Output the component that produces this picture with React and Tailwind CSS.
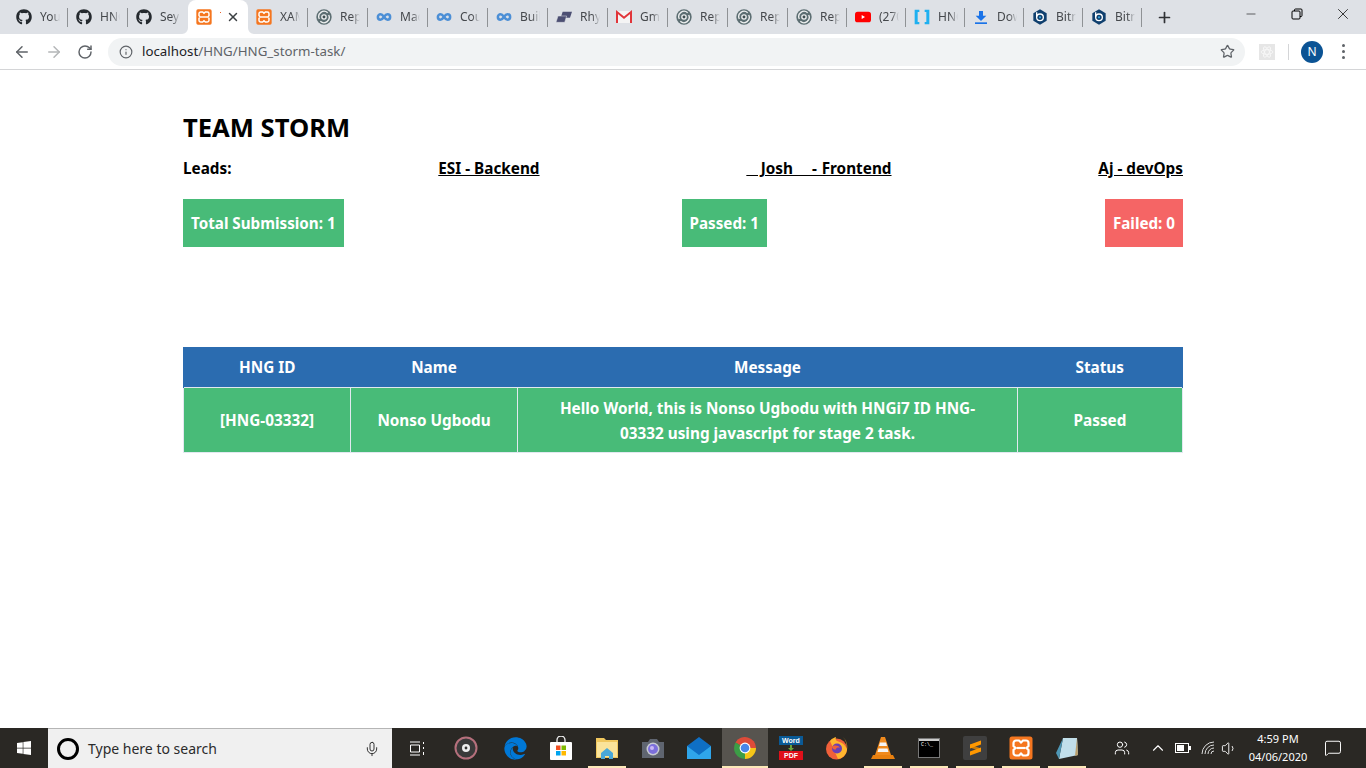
import React from "react";
import { FaGithub, FaEdge, FaWindows } from "react-icons/fa";
import { ArrowLeft, ArrowRight, RotateCw, Info, Star, Plus, X, Minus, Mic, ChevronUp, Volume1, MessageSquare, Users } from "lucide-react";

const Xampp = ({ size = 16 }) => (
    <svg width={size} height={size} viewBox="0 0 24 24">
        <rect x="0.5" y="0.5" width="23" height="23" rx="2.5" fill="#f5761f" />
        <path d="M7 4.5h3l2 2 2-2h3a2.5 2.5 0 0 1 2.5 2.5v3L17.5 12l2 2v3a2.5 2.5 0 0 1-2.5 2.5h-3l-2-2-2 2H7A2.5 2.5 0 0 1 4.5 17v-3l2-2-2-2V7A2.5 2.5 0 0 1 7 4.5z" fill="none" stroke="#fff" strokeWidth="2.2" />
        <path d="M7.5 12h9" stroke="#fff" strokeWidth="2.2" />
    </svg>
);

const Swirl = () => (
    <svg width="16" height="16" viewBox="0 0 24 24">
        <circle cx="12" cy="12" r="11.5" fill="#5c6e72" />
        <path d="M5 15A8 8 0 0 1 17.500 5.500" fill="none" stroke="#eef0f1" strokeWidth="2" />
        <path d="M19 9A8 8 0 0 1 6.500 18.500" fill="none" stroke="#eef0f1" strokeWidth="2" />
        <circle cx="12" cy="12" r="4.200" fill="#eef0f1" />
        <circle cx="12" cy="12" r="2.200" fill="#3d4d50" />
    </svg>
);

const Loop = () => (
    <svg width="16" height="16" viewBox="0 0 24 24">
        <path d="M12 12c-1.800-2.600-3.200-4-5.200-4a4 4 0 0 0 0 8c2 0 3.400-1.400 5.200-4s3.200-4 5.200-4a4 4 0 0 1 0 8c-2 0-3.400-1.400-5.200-4z" fill="none" stroke="#4c8fd6" strokeWidth="3.800" />
    </svg>
);

const Rhythm = () => (
    <svg width="16" height="16" viewBox="0 0 24 24">
        <path d="M10 4h14l-3 9H7z" fill="#4c4f73" />
        <path d="M3 10.500h13l-3 9.500H0z" fill="#4c4f73" stroke="#dee1e6" strokeWidth="0.800" />
    </svg>
);

const Gmail = () => (
    <svg width="16" height="16" viewBox="0 0 24 24">
        <rect x="0" y="3" width="24" height="18" fill="#f4f4f4" />
        <path d="M1.500 21V4.500L12 13 22.500 4.500V21" fill="none" stroke="#e1353a" strokeWidth="3" />
    </svg>
);

const Youtube = () => (
    <svg width="16" height="16" viewBox="0 0 24 24">
        <rect x="0" y="4" width="24" height="16" rx="4" fill="#f00" />
        <path d="M10 9l5 3-5 3z" fill="#fff" />
    </svg>
);

const Brackets = () => (
    <svg width="16" height="16" viewBox="0 0 24 24">
        <path d="M1 1h7v3.500H5.500v15H8V23H1z" fill="#1eb0f0" />
        <path d="M23 1h-7v3.500h2.500v15H16V23h7z" fill="#1eb0f0" />
    </svg>
);

const Download = () => (
    <svg width="16" height="16" viewBox="0 0 24 24">
        <path d="M9 3h6v7h5l-8 8-8-8h5z" fill="#1a73e8" />
        <rect x="3" y="20" width="18" height="2.500" fill="#1a73e8" />
    </svg>
);

const Bitnami = () => (
    <svg width="16" height="16" viewBox="0 0 24 24">
        <path d="M12 0.500l10 5.700v11.600l-10 5.700-10-5.700V6.200z" fill="#0f3f6e" />
        <circle cx="12" cy="12.500" r="5" fill="none" stroke="#fff" strokeWidth="2" />
        <circle cx="12" cy="12.500" r="1.600" fill="#37a8e0" />
        <path d="M7 12V5" stroke="#fff" strokeWidth="2" />
    </svg>
);

const Github = () => <FaGithub size={16} color="#24292e" />;

const tabs = [
    { icon: Github, label: "Your" },
    { icon: Github, label: "HNG" },
    { icon: Github, label: "Seyi" },
    { icon: Xampp, label: "", active: true },
    { icon: Xampp, label: "XAM" },
    { icon: Swirl, label: "Rep" },
    { icon: Loop, label: "Mac" },
    { icon: Loop, label: "Cou" },
    { icon: Loop, label: "Build" },
    { icon: Rhythm, label: "Rhy" },
    { icon: Gmail, label: "Gma" },
    { icon: Swirl, label: "Rep" },
    { icon: Swirl, label: "Rep" },
    { icon: Swirl, label: "Rep", small: true },
    { icon: Youtube, label: "(270", small: true },
    { icon: Brackets, label: "HNG", small: true },
    { icon: Download, label: "Dow", small: true },
    { icon: Bitnami, label: "Bitn", small: true },
    { icon: Bitnami, label: "Bitn", small: true },
];

function Tab({ tab, hideSep }) {
    const Icon = tab.icon;
    return (
        <div className={`relative h-[34px] flex items-center pl-2 shrink-0 ${tab.small ? "w-[59px]" : "w-[60px]"} ${tab.active ? "bg-white rounded-t-lg" : ""}`}>
            <Icon />
            {tab.active ? (
                <>
                    <span className="absolute left-[32px] top-[12px] h-px w-px bg-[#e8612c]"></span>
                    <X size={14} strokeWidth={2.5} className="ml-[14px] text-[#3c4043]" />
                    <svg width="6" height="6" viewBox="0 0 6 6" className="absolute bottom-0 left-[-6px]"><path d="M6 0v6H0a6 6 0 0 0 6-6z" fill="#fff" /></svg>
                    <svg width="6" height="6" viewBox="0 0 6 6" className="absolute bottom-0 right-[-6px]"><path d="M0 0v6h6a6 6 0 0 1-6-6z" fill="#fff" /></svg>
                </>
            ) : (
                <span className="ml-2 w-[20px] overflow-hidden whitespace-nowrap text-xs text-[#45484c] [mask-image:linear-gradient(to_right,black_60%,transparent)]">{tab.label}</span>
            )}
            {!tab.active && !hideSep && <span className="absolute right-0 top-[8px] h-[19px] w-px bg-[#8f9295]"></span>}
        </div>
    );
}

function TabStrip() {
    return (
        <div className="flex h-[34px] bg-[#dee1e6] pl-2">
            {tabs.map((tab, i) => (
                <Tab key={i} tab={tab} hideSep={tabs[i + 1] && tabs[i + 1].active} />
            ))}
            <div className="ml-[14px] flex items-center">
                <Plus size={17} strokeWidth={2.4} className="text-[#303235]" />
            </div>
            <div className="ml-auto flex">
                <div className="w-[46px] h-[28px] flex items-center justify-center">
                    <Minus size={14} strokeWidth={1} className="text-black" />
                </div>
                <div className="w-[46px] h-[28px] flex items-center justify-center">
                    <svg width="12" height="12" viewBox="0 0 12 12" fill="none" stroke="#000" strokeWidth="1">
                        <rect x="1" y="3" width="8" height="8" rx="1" />
                        <path d="M3.500 3V2a1 1 0 0 1 1-1H10a1 1 0 0 1 1 1v5.500a1 1 0 0 1-1 1H9" />
                    </svg>
                </div>
                <div className="w-[46px] h-[28px] flex items-center justify-center">
                    <X size={18} strokeWidth={1} className="text-black" />
                </div>
            </div>
        </div>
    );
}

function Toolbar() {
    return (
        <div className="flex items-center h-[36px] bg-white border-b border-[#d4d5d7]">
            <div className="w-[108px] flex items-center pl-[13px] gap-[14px]">
                <ArrowLeft size={18} strokeWidth={2} className="text-[#5f6368]" />
                <ArrowRight size={18} strokeWidth={2} className="text-[#b4b6b8]" />
                <RotateCw size={16} strokeWidth={2.2} className="text-[#5f6368]" />
            </div>
            <div className="w-[1137px] h-[28px] rounded-full bg-[#f1f3f4] flex items-center pl-[11px] pr-[10px]">
                <Info size={14} strokeWidth={2} className="text-[#5f6368]" />
                <span className="ml-[9px] text-[13.3px] text-[#202124]">localhost<span className="text-[#5f6368]">/HNG/HNG_storm-task/</span></span>
                <Star size={15} strokeWidth={2} className="ml-auto text-[#5f6368]" />
            </div>
            <div className="ml-[14px] w-[16px] h-[16px] bg-[#e6e6e6] flex items-center justify-center">
                <svg width="14" height="14" viewBox="0 0 24 24" fill="none" stroke="#f8f8f8" strokeWidth="1.500">
                    <ellipse cx="12" cy="12" rx="10" ry="4" />
                    <ellipse cx="12" cy="12" rx="10" ry="4" transform="rotate(60 12 12)" />
                    <ellipse cx="12" cy="12" rx="10" ry="4" transform="rotate(120 12 12)" />
                </svg>
            </div>
            <span className="ml-[13px] h-[16px] w-px bg-[#d4d5d7]"></span>
            <div className="ml-[12px] w-[22px] h-[22px] rounded-full bg-[#0b5394] text-white text-xs flex items-center justify-center">N</div>
            <div className="ml-[19px] flex flex-col gap-[3px]">
                <span className="w-[3px] h-[3px] rounded-full bg-[#5f6368]"></span>
                <span className="w-[3px] h-[3px] rounded-full bg-[#5f6368]"></span>
                <span className="w-[3px] h-[3px] rounded-full bg-[#5f6368]"></span>
            </div>
        </div>
    );
}

function Content() {
    return (
        <main className="flex-1 bg-white font-['Noto_Sans',sans-serif] font-bold text-black">
            <div className="w-[1000px] ml-[183px] pt-[41px]">
                <h1 className="text-[25.6px] leading-[34px]">TEAM STORM</h1>
                <div className="mt-[13px] flex justify-between text-[15.3px] leading-[20px]">
                    <span>Leads:</span>
                    <u>ESI - Backend</u>
                    <u className="[word-spacing:0.8px]">&nbsp;&nbsp;&nbsp;Josh&nbsp;&nbsp;&nbsp; - Frontend</u>
                    <u>Aj - devOps</u>
                </div>
                <div className="mt-[21px] flex justify-between text-[15.2px] text-white">
                    <div className="h-12 px-2 flex items-center bg-[#48bb78]">Total Submission: 1</div>
                    <div className="h-12 px-2 flex items-center bg-[#48bb78]">Passed: 1</div>
                    <div className="h-12 px-2 flex items-center bg-[#f56565]">Failed: 0</div>
                </div>
                <table className="mt-[100px] w-full table-fixed border-collapse text-[15.3px] text-white text-center">
                    <thead>
                        <tr className="h-[40px] bg-[#2b6cb0]">
                            <th className="w-[167px] pt-[2px] border-l border-[#2b6cb0]">HNG ID</th>
                            <th className="w-[167px] pt-[2px]">Name</th>
                            <th className="w-[500px] pt-[2px]">Message</th>
                            <th className="pt-[2px] border-r border-[#2b6cb0]">Status</th>
                        </tr>
                    </thead>
                    <tbody>
                        <tr className="h-[65px] bg-[#48bb78]">
                            <td className="pt-[2px] border border-[#e2e8f0]">[HNG-03332]</td>
                            <td className="pt-[2px] border border-[#e2e8f0]">Nonso Ugbodu</td>
                            <td className="pt-[2px] border border-[#e2e8f0] leading-[25px] px-[24px]">Hello World, this is Nonso Ugbodu with HNGi7 ID HNG-03332 using javascript for stage 2 task.</td>
                            <td className="pt-[2px] border border-[#e2e8f0]">Passed</td>
                        </tr>
                    </tbody>
                </table>
            </div>
        </main>
    );
}

const Disc = () => (
    <svg width="24" height="24" viewBox="0 0 24 24">
        <circle cx="12" cy="12" r="10.500" fill="#3a3a3a" stroke="#b5707c" strokeWidth="2" />
        <circle cx="12" cy="12" r="4" fill="#eee" />
        <circle cx="12" cy="12" r="1.400" fill="#333" />
    </svg>
);

const Store = () => (
    <svg width="24" height="24" viewBox="0 0 24 24">
        <path d="M8 7V4a4 4 0 0 1 8 0v3" fill="none" stroke="#eee" strokeWidth="1.300" />
        <rect x="1" y="6" width="22" height="18" rx="1" fill="#fff" />
        <rect x="7" y="9.500" width="4.500" height="4.500" fill="#f25022" />
        <rect x="12.500" y="9.500" width="4.500" height="4.500" fill="#7fba00" />
        <rect x="7" y="15" width="4.500" height="4.500" fill="#00a4ef" />
        <rect x="12.500" y="15" width="4.500" height="4.500" fill="#ffb900" />
    </svg>
);

const Explorer = () => (
    <svg width="24" height="24" viewBox="0 0 24 24">
        <path d="M1 2h8l2 2h12v18H1z" fill="#f0c75e" />
        <rect x="2" y="6" width="20" height="15" fill="#fae39a" />
        <path d="M6 23v-6l6-5 6 5v6h-4v-3h-4v3z" fill="#4aa8d8" />
    </svg>
);

const Camera = () => (
    <svg width="24" height="24" viewBox="0 0 24 24">
        <path d="M1 6h6l2-3h7l2 3h5v16H1z" fill="#5f6570" />
        <circle cx="12" cy="13" r="6.500" fill="#c8cbd2" />
        <circle cx="12" cy="13" r="5" fill="#7c6fdc" />
        <circle cx="11" cy="12" r="2" fill="#c9b8f5" />
    </svg>
);

const Mail = () => (
    <svg width="24" height="24" viewBox="0 0 24 24">
        <path d="M12 1L0 10v13h24V10z" fill="#0f6fc4" />
        <path d="M0 10l12 9 12-9v13H0z" fill="#2fa5ea" />
    </svg>
);

const Chrome = () => (
    <svg width="24" height="24" viewBox="0 0 24 24">
        <path d="M12 12L2.500 6.500A11 11 0 0 1 23 12z" fill="#dd4b39" />
        <path d="M12 12h11A11 11 0 0 1 12 23z" fill="#f5c518" />
        <path d="M12 12v11A11 11 0 0 1 2.500 6.500z" fill="#3c9d46" />
        <circle cx="12" cy="12" r="5.400" fill="#fff" />
        <circle cx="12" cy="12" r="4.300" fill="#4a86e8" />
    </svg>
);

const WordPdf = () => (
    <div className="w-[24px] flex flex-col items-center font-['Liberation_Sans',sans-serif] font-bold text-[7px] leading-[9px] text-white">
        <div className="w-full h-[9px] bg-[#0a5a96] text-center">Word</div>
        <svg width="8" height="6" viewBox="0 0 8 6"><path d="M3 0h2v3h2L4 6 1 3h2z" fill="#6ba53a" /></svg>
        <div className="w-full h-[9px] bg-[#e0101a] text-center">PDF</div>
    </div>
);

const Firefox = () => (
    <svg width="24" height="24" viewBox="0 0 24 24">
        <circle cx="11.500" cy="13" r="10.500" fill="#f0603a" />
        <path d="M5 5c2-3 6-4 6-4s-1 3 1 4 7 1 10 8c0-5-1-9-4-12 3 3 5 7 4 13-1 5-4 8-9 9z" fill="#ffb52e" />
        <circle cx="12" cy="12.500" r="5" fill="#6a3fb5" />
        <path d="M7 11c2-2 6-2 8 1-2-1-4 0-4 1s-3 1-4-2z" fill="#f0603a" />
    </svg>
);

const Vlc = () => (
    <svg width="24" height="24" viewBox="0 0 24 24">
        <path d="M10 1h4l6 18h-16z" fill="#f08a1d" />
        <path d="M9 6.500h6l1 3.500H8zM7.500 12.500h9l1 3.500h-11z" fill="#f4f4f4" />
        <path d="M2 19h20l2 4H0z" fill="#e8800f" />
    </svg>
);

const Cmd = () => (
    <div className="w-[22px] h-[20px] border border-[#777] bg-black">
        <div className="h-[2px] bg-[#ccc]"></div>
        <div className="pl-[2px] font-['Liberation_Mono',monospace] text-[5px] leading-[8px] text-white">C:\_</div>
    </div>
);

const Sublime = () => (
    <div className="w-[24px] h-[24px] rounded-[2px] bg-[#3f3f3f] flex items-center justify-center">
        <svg width="13" height="16" viewBox="0 0 13 16">
            <path d="M1 4.500l11 4v3L1 7.500z" fill="#c97a08" />
            <path d="M12 0.500v4L1 8.500v-4z" fill="#ff9800" />
            <path d="M12 7.500v4L1 15.500v-4z" fill="#ff9800" />
        </svg>
    </div>
);

const Notepad = () => (
    <svg width="24" height="24" viewBox="0 0 24 24">
        <path d="M8 2l14 0 1 17-19 4z" fill="#c2dfea" />
        <path d="M8 2L1 17l3 6z" fill="#4e97b5" />
        <path d="M22 2l1 17-3 1z" fill="#b99d6a" />
    </svg>
);

const taskIcons = [
    { node: <div className="pr-[6px]"><Disc /></div> },
    { node: <FaEdge size={23} color="#0078d7" /> },
    { node: <Store /> },
    { node: <Explorer />, open: true },
    { node: <Camera /> },
    { node: <Mail /> },
    { node: <Chrome />, open: true, active: true },
    { node: <WordPdf /> },
    { node: <Firefox /> },
    { node: <Vlc />, open: true },
    { node: <Cmd />, open: true },
    { node: <Sublime />, open: true },
    { node: <Xampp size={24} />, open: true },
    { node: <Notepad />, open: true },
];

function Taskbar() {
    return (
        <div className="h-[40px] flex items-center bg-[#2a2824] text-white font-['Noto_Sans',sans-serif]">
            <div className="w-[48px] flex justify-center">
                <FaWindows size={16} color="#fff" />
            </div>
            <div className="w-[344px] h-full bg-[#f0f0f0] border-t border-[#b5b5b5] flex items-center pl-[9px] pr-[12px] text-[#2b2b2b]">
                <span className="w-[22px] h-[22px] rounded-full border-[3px] border-black"></span>
                <span className="ml-[9px] text-sm">Type here to search</span>
                <Mic size={16} strokeWidth={1.500} className="ml-auto text-[#333]" />
            </div>
            <div className="w-[54px] pr-[4px] flex justify-center">
                <svg width="16" height="15" viewBox="0 0 16 15" fill="none" stroke="#fff" strokeWidth="1">
                    <path d="M1 1h10M1 14h10M1.500 4h9v7h-9zM14.500 1v2M14.500 6v2M14.500 11v3" />
                </svg>
            </div>
            {taskIcons.map((item, i) => (
                <div key={i} className={`relative w-[46px] h-full flex items-center justify-center ${item.active ? "bg-[#57544f]" : ""}`}>
                    {item.node}
                    {item.open && <span className={`absolute bottom-0 h-[2px] bg-[#fbe8b8] ${item.active ? "inset-x-0" : "inset-x-1"}`}></span>}
                </div>
            ))}
            <div className="ml-auto flex items-center">
                <Users size={16} strokeWidth={1.500} className="mr-[19px]" />
                <ChevronUp size={18} strokeWidth={1.500} className="mr-[8px]" />
                <svg width="16" height="10" viewBox="0 0 16 10" className="mr-[10px]">
                    <rect x="0.500" y="0.500" width="13" height="9" fill="none" stroke="#fff" />
                    <rect x="2" y="2" width="7" height="6" fill="#fff" />
                    <rect x="14" y="3" width="2" height="4" fill="#fff" />
                </svg>
                <svg width="14" height="14" viewBox="0 0 14 14" fill="none" stroke="#ddd" strokeWidth="1" className="mr-[6px]">
                    <path d="M1 13A12 12 0 0 1 13 1M4 13a9 9 0 0 1 9-9M7 13a6 6 0 0 1 6-6M10 13a3 3 0 0 1 3-3" />
                </svg>
                <Volume1 size={17} strokeWidth={1.300} />
                <div className="w-[80px] text-center text-[11px] leading-[18px]">
                    <div>4:59 PM</div>
                    <div>04/06/2020</div>
                </div>
                <MessageSquare size={18} strokeWidth={1.300} className="ml-[6px] mr-[24px]" />
            </div>
        </div>
    );
}

function App() {
    return (
        <div className="h-screen w-screen flex flex-col overflow-hidden font-['Noto_Sans',sans-serif]">
            <TabStrip />
            <Toolbar />
            <Content />
            <Taskbar />
        </div>
    );
}

export default App;
